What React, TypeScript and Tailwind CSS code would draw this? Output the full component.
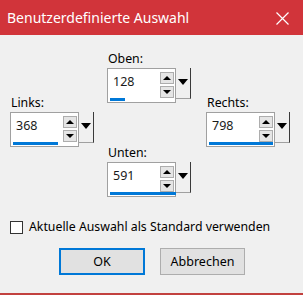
const font = { fontFamily: '"Noto Sans", "Open Sans", sans-serif' };

type SpinProps = { label: string; value: string; bar: number };

const SpinField = ({ label, value, bar }: SpinProps) => {
  return (
    <div className="flex flex-col">
      <div className="text-[12.3px] leading-[18px] h-[18px] text-[#000] pl-[1px]">{label}</div>
      <div className="flex items-start">
        <div className="w-[69px] h-[35px] border border-[#a0a0a0] bg-white flex flex-col">
          <div className="flex-1 flex">
            <div className="flex-1 flex items-center pl-[5px] pb-[2px] text-[12.5px] text-[#1a1a1a]">{value}</div>
            <div className="w-[14px] flex flex-col gap-[2px] pt-[3px] mr-[1px]">
              <div className="h-[12px] border border-[#adadad] bg-[#e5e5e5] flex items-center justify-center">
                <div className="w-0 h-0 border-l-[4px] border-r-[4px] border-b-[4px] border-l-transparent border-r-transparent border-b-black" />
              </div>
              <div className="h-[12px] border border-[#adadad] bg-[#e5e5e5] flex items-center justify-center">
                <div className="w-0 h-0 border-l-[4px] border-r-[4px] border-t-[4px] border-l-transparent border-r-transparent border-t-black" />
              </div>
            </div>
          </div>
          <div className="h-[3px] ml-[2px] mb-[1px] bg-[#0078d7]" style={{ width: bar }} />
        </div>
        <div className="w-[15px] h-[31px] bg-[#f0f0f0] border-r border-r-[#3a3a3a] border-b border-b-[#a0a0a0] flex items-center justify-center pb-[2px]">
          <div className="w-0 h-0 border-l-[5px] border-r-[5px] border-t-[6px] border-l-transparent border-r-transparent border-t-black" />
        </div>
      </div>
    </div>
  );
};

export default function App() {
  return (
    <div className="w-[303px] h-[295px] bg-[#f0f0f0] flex flex-col border-b-[2px] border-b-[#c2413f]" style={font}>
      <div className="h-[35px] bg-[#d1343a] flex items-center justify-between pl-[7px] pr-[14px] shrink-0">
        <span className="text-white text-[14px]">Benutzerdefinierte Auswahl</span>
        <svg width="13" height="13" viewBox="0 0 13 13" className="mt-[1px]">
          <path d="M0.5 0.5 L12.5 12.5 M12.5 0.5 L0.5 12.5" stroke="white" strokeWidth="1.2" fill="none" />
        </svg>
      </div>
      <div className="flex pl-[10px]">
        <div className="w-[97px] pt-[59px]">
          <SpinField label="Links:" value="368" bar={45} />
        </div>
        <div className="w-[99px] pt-[15px] flex flex-col gap-[41px]">
          <SpinField label="Oben:" value="128" bar={15} />
          <SpinField label="Unten:" value="591" bar={66} />
        </div>
        <div className="pt-[59px]">
          <SpinField label="Rechts:" value="798" bar={64} />
        </div>
      </div>
      <label className="flex items-center gap-[6px] pl-[10px] mt-[21px] text-[12.3px] text-black">
        <span className="w-[13px] h-[13px] border border-[#333] bg-white shrink-0" />
        Aktuelle Auswahl als Standard verwenden
      </label>
      <div className="flex justify-center gap-[15px] mt-[12px] pl-[1px]">
        <button className="w-[86px] h-[27px] border-[2px] border-[#0078d7] bg-[#e1e1e1] text-[12.5px] text-black">OK</button>
        <button className="w-[85px] h-[27px] border border-[#adadad] bg-[#e1e1e1] text-[12.5px] text-black">Abbrechen</button>
      </div>
    </div>
  );
}
